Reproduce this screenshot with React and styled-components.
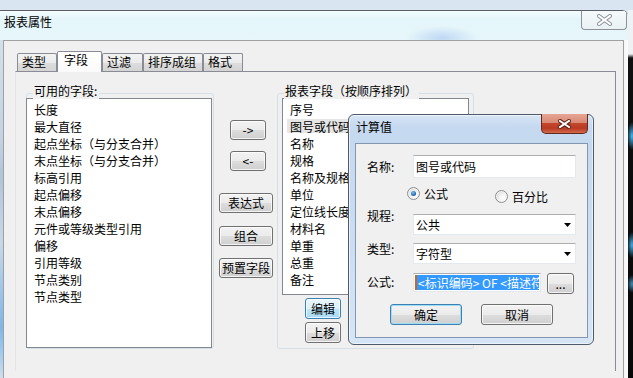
import React from 'react';
import styled, { createGlobalStyle, css } from 'styled-components';

const FONT = `"Noto Sans CJK SC", "Noto Sans", sans-serif`;

const GlobalStyle = createGlobalStyle`
  html, body {
    margin: 0;
    padding: 0;
    background: #dbe6f3;
  }
  body {
    font-family: ${FONT};
    font-size: 12px;
    color: #000;
  }
  * {
    box-sizing: border-box;
  }
`;

const Screen = styled.div`
  position: relative;
  width: 633px;
  height: 378px;
  overflow: hidden;
  display: flex;
  flex-direction: column;
  background: #dbe6f3;
`;

const TopStrip = styled.div`
  flex: none;
  height: 10px;
  background: #dae5f2;
`;

const Desktop = styled.div`
  flex: 1;
  display: flex;
  min-height: 0;
`;

const DesktopEdge = styled.div`
  flex: 1;
  background:
    radial-gradient(ellipse 5px 14px at 4px 126px, rgba(70, 195, 255, 0.95), transparent),
    radial-gradient(ellipse 5px 13px at 4px 235px, rgba(70, 195, 255, 0.9), transparent),
    radial-gradient(ellipse 5px 9px at 4px 274px, rgba(90, 200, 255, 0.7), transparent),
    linear-gradient(180deg, #eef2f5 0, #eef2f5 44px, #101010 48px, #080808 100%);
`;

/* ---------- main window ---------- */

const Window = styled.div`
  width: 628px;
  flex: none;
  display: flex;
  flex-direction: column;
  border-top: 1px solid #5a5f66;
  border-top-right-radius: 6px;
  overflow: hidden;
`;

const TitleBar = styled.div`
  height: 29px;
  flex: none;
  display: flex;
  align-items: flex-start;
  background:
    radial-gradient(ellipse 36px 12px at 442px 27px, rgba(120, 160, 235, 0.35), transparent),
    linear-gradient(180deg, #f4fcfe 0%, #e5f6fa 25%, #e6f6fa 100%);
`;

const WindowTitle = styled.div`
  flex: 1;
  padding: 3px 0 0 4px;
  line-height: 16px;
`;

const CloseBox = styled.div`
  width: 46px;
  height: 20px;
  margin: -1px 1px 0 0;
  border: 1px solid #8b929b;
  border-top: none;
  border-radius: 0 0 4px 4px;
  background: linear-gradient(180deg, #f6fafb, #e9f1f4);
  display: flex;
  align-items: center;
  justify-content: center;
`;

const WindowBody = styled.div`
  flex: 1;
  display: flex;
  min-height: 0;
`;

const SideFrame = styled.div`
  flex: none;
  width: ${p => p.$w}px;
  background: ${p => p.$bg};
`;

const Client = styled.div`
  flex: 1;
  border: 1px solid #a0a0a0;
  border-bottom: none;
  background: #f0f0f0;
  padding: 10px 0 0 11px;
`;

/* ---------- tabs ---------- */

const TabControl = styled.div`
  width: 601px;
  display: flex;
  flex-direction: column;
`;

const TabStrip = styled.div`
  height: 20px;
  display: flex;
  align-items: flex-end;
  padding-left: 2px;
`;

const Tab = styled.div`
  position: relative;
  width: ${p => p.$w}px;
  height: 18px;
  border: 1px solid #898c95;
  border-bottom: none;
  border-radius: 2px 2px 0 0;
  padding-left: 4px;
  line-height: 16px;
  white-space: nowrap;
  background: linear-gradient(180deg, #f3f3f3 0%, #ebebeb 50%, #dddddd 51%, #d4d4d4 100%);
  ${p => p.$active && css`
    height: 21px;
    margin-bottom: -1px;
    padding-left: 6px;
    z-index: 1;
    background: linear-gradient(180deg, #ffffff 0%, #fafafa 100%);
  `}
`;

const Panel = styled.div`
  height: 300px;
  border-top: 1px solid #898c95;
  border-right: 1px solid #898c95;
  border-left: 1px solid #e6e6e6;
  display: flex;
  align-items: flex-start;
  padding-left: 10px;
`;

/* ---------- group boxes & lists ---------- */

const GroupBox = styled.div`
  position: relative;
  flex: none;
  margin: 21px 0 0 ${p => p.$ml || 0}px;
  width: ${p => p.$w}px;
  height: 256px;
  border: 1px solid #d5dfe5;
  border-radius: 3px;
  padding-top: 4px;
  display: flex;
  flex-direction: column;
  align-items: flex-start;
`;

const GroupTitle = styled.span`
  position: absolute;
  top: -11px;
  left: 6px;
  padding: 0 2px 0 1px;
  background: #f0f0f0;
  line-height: 16px;
  white-space: nowrap;
`;

const ListBox = styled.div`
  width: ${p => p.$w}px;
  height: ${p => p.$h}px;
  margin-left: ${p => p.$ml}px;
  border: 1px solid #828790;
  background: #fff;
  padding-top: 2px;
  overflow: hidden;
`;

const ListItem = styled.div`
  height: 17px;
  line-height: 17px;
  white-space: nowrap;
  margin-left: ${p => p.$inset}px;
  padding-left: ${p => p.$pad}px;
  ${p => p.$selected && css`
    background: linear-gradient(180deg, transparent 1px, #e6e6e6 1px, #e6e6e6 15px, transparent 15px);
  `}
`;

/* ---------- buttons ---------- */

const Button = styled.button`
  flex: none;
  font-family: ${FONT};
  font-size: 12px;
  line-height: 16px;
  color: #000;
  width: ${p => p.$w}px;
  height: ${p => p.$h || 20}px;
  margin: ${p => p.$m || '0'};
  padding: 0;
  border: 1px solid #707070;
  border-radius: 3px;
  background: linear-gradient(180deg, #f2f2f2 0%, #ebebeb 50%, #dddddd 51%, #cfcfcf 100%);
  box-shadow: inset 0 0 0 1px rgba(255, 255, 255, 0.75);
  white-space: nowrap;
  ${p => p.$hot && css`
    border-color: #3c7fb1;
    background: linear-gradient(180deg, #eaf6fd 0%, #d9f0fc 50%, #bee6fd 51%, #a7d9f5 100%);
  `}
  ${p => p.$default && css`
    border-color: #3c7fb1;
    box-shadow: inset 0 0 0 1px #9fdcf9;
  `}
`;

const ButtonColumn = styled.div`
  flex: none;
  width: 54px;
  margin: 48px 0 0 5px;
  display: flex;
  flex-direction: column;
  align-items: flex-start;
`;

/* ---------- calc dialog ---------- */

const CalcWindow = styled.div`
  position: absolute;
  left: 348px;
  top: 114px;
  width: 246px;
  height: 231px;
  border: 1px solid #4f5b6a;
  border-radius: 6px;
  padding: 0 5px 6px 6px;
  display: flex;
  flex-direction: column;
  background:
    linear-gradient(180deg, rgba(255, 255, 255, 0.35) 0, rgba(255, 255, 255, 0) 12px),
    linear-gradient(180deg, #c4d8ef 0%, #cadcf1 45%, #d6e5f6 100%);
  box-shadow: inset 0 0 0 1px rgba(255, 255, 255, 0.55);
`;

const CalcTitleBar = styled.div`
  height: 28px;
  flex: none;
  display: flex;
  align-items: flex-start;
`;

const CalcTitle = styled.div`
  flex: 1;
  padding: 4px 0 0 1px;
  line-height: 16px;
`;

const RedClose = styled.div`
  width: 47px;
  height: 20px;
  margin-top: -1px;
  border: 1px solid #5e2a22;
  border-top: none;
  border-radius: 0 0 5px 5px;
  background: linear-gradient(180deg, #e7a595 0%, #d88a74 45%, #c2462d 50%, #b93a22 75%, #d26a4c 100%);
  display: flex;
  align-items: center;
  justify-content: center;
`;

const CalcClient = styled.div`
  flex: 1;
  border: 1px solid #8397b1;
  background: #f0f0f0;
  padding-left: 11px;
  display: flex;
  flex-direction: column;
`;

const Field = styled.div`
  flex: none;
  display: flex;
  align-items: flex-start;
  margin-top: ${p => p.$mt}px;
  height: ${p => p.$h}px;
`;

const FieldLabel = styled.div`
  flex: none;
  width: 46px;
  line-height: 16px;
  margin-top: ${p => p.$dy}px;
`;

const TextBox = styled.div`
  flex: none;
  width: ${p => p.$w}px;
  height: ${p => p.$h}px;
  border: 1px solid #e3e9ef;
  border-top-color: #abadb3;
  background: #fff;
  display: flex;
  align-items: center;
  padding: 0 4px 0 2px;
  line-height: 16px;
  white-space: nowrap;
  overflow: hidden;
`;

const BoxText = styled.span`
  flex: 1;
`;

const SelectedText = styled.div`
  flex: 1;
  height: 100%;
  background: #3399ff;
  color: #fff;
  border-left: 2px solid #c8661e;
  padding-left: 1px;
  display: flex;
  align-items: center;
  white-space: nowrap;
  overflow: hidden;
`;

const RadioItem = styled.div`
  display: flex;
  align-items: center;
  height: 13px;
  margin: ${p => p.$dy || 0}px 0 0 ${p => p.$ml}px;
  line-height: 16px;
`;

const RadioCircle = styled.span`
  position: relative;
  flex: none;
  width: 13px;
  height: 13px;
  margin-right: 4px;
  border: 1px solid #8e8f8f;
  border-radius: 50%;
  background: radial-gradient(circle at 65% 65%, #ffffff 0%, #f2f2f2 40%, #c9c9c9 100%);
  box-shadow: inset 0 0 0 1px #f4f4f4;
  ${p => p.$checked && css`
    &::after {
      content: '';
      position: absolute;
      left: 3px;
      top: 3px;
      width: 5px;
      height: 5px;
      border-radius: 50%;
      background: radial-gradient(circle at 40% 35%, #7fc0f2 0%, #2a71b6 55%, #173e72 100%);
    }
  `}
`;

function CloseX({ stroke, fill, w = 13, h = 10, sw = 4 }) {
  return (
    <svg width={w + 2} height={h + 2} viewBox={`0 0 ${w + 2} ${h + 2}`}>
      <path d={`M2 2 L${w} ${h} M${w} 2 L2 ${h}`} stroke={stroke} strokeWidth={sw} strokeLinecap="square" fill="none" />
      <path d={`M2 2 L${w} ${h} M${w} 2 L2 ${h}`} stroke={fill} strokeWidth={sw - 2} strokeLinecap="square" fill="none" />
    </svg>
  );
}

function Arrow() {
  return (
    <svg width="7" height="4" viewBox="0 0 7 4">
      <path d="M0 0 H7 L3.5 4 Z" fill="#000" />
    </svg>
  );
}

const availableFields = [
  '长度', '最大直径', '起点坐标（与分支合并）', '末点坐标（与分支合并）', '标高引用',
  '起点偏移', '末点偏移', '元件或等级类型引用', '偏移', '引用等级', '节点类别', '节点类型',
];

const reportFields = [
  '序号', '图号或代码', '名称', '规格', '名称及规格', '单位',
  '定位线长度', '材料名', '单重', '总重', '备注',
];

const tabs = [
  { label: '类型', w: 40 },
  { label: '字段', w: 45, active: true },
  { label: '过滤', w: 41 },
  { label: '排序成组', w: 60 },
  { label: '格式', w: 40 },
];

export default function App() {
  return (
    <Screen>
      <GlobalStyle />
      <TopStrip />
      <Desktop>
        <Window>
          <TitleBar>
            <WindowTitle>报表属性</WindowTitle>
            <CloseBox>
              <CloseX stroke="#8a9099" fill="#ffffff" />
            </CloseBox>
          </TitleBar>
          <WindowBody>
            <SideFrame $w={3} $bg="linear-gradient(180deg, #d3dfec 0%, #c2d2e4 30%, #b0c4da 40%, #c8d8ea 60%, #7db7ea 85%, #9ccaf0 92%, #cfdeee 100%)" />
            <Client>
              <TabControl>
                <TabStrip>
                  {tabs.map(t => (
                    <Tab key={t.label} $w={t.w} $active={t.active}>{t.label}</Tab>
                  ))}
                </TabStrip>
                <Panel>
                  <GroupBox $w={188}>
                    <GroupTitle>可用的字段:</GroupTitle>
                    <ListBox $w={186} $h={250} $ml={-1}>
                      {availableFields.map(f => (
                        <ListItem key={f} $inset={0} $pad={7}>{f}</ListItem>
                      ))}
                    </ListBox>
                  </GroupBox>

                  <ButtonColumn>
                    <Button $w={36} $m="0 0 0 11px">-&gt;</Button>
                    <Button $w={36} $m="11px 0 0 11px">&lt;-</Button>
                    <Button $w={54} $m="22px 0 0 0">表达式</Button>
                    <Button $w={54} $m="13px 0 0 0">组合</Button>
                    <Button $w={54} $m="12px 0 0 0">预置字段</Button>
                  </ButtonColumn>

                  <GroupBox $w={197} $ml={4}>
                    <GroupTitle>报表字段（按顺序排列）</GroupTitle>
                    <ListBox $w={187} $h={197} $ml={4}>
                      {reportFields.map((f, i) => (
                        <ListItem key={f} $inset={4} $pad={3} $selected={i === 1}>{f}</ListItem>
                      ))}
                    </ListBox>
                    <Button $w={36} $h={21} $m="3px 0 0 27px" $hot>编辑</Button>
                    <Button $w={36} $h={21} $m="3px 0 0 27px">上移</Button>
                  </GroupBox>
                </Panel>
              </TabControl>
            </Client>
            <SideFrame $w={4} $bg="linear-gradient(90deg, #f6f6f6, #fbfbfb)" />
          </WindowBody>
        </Window>
        <DesktopEdge />
      </Desktop>

      <CalcWindow>
        <CalcTitleBar>
          <CalcTitle>计算值</CalcTitle>
          <RedClose>
            <CloseX stroke="#5a1e14" fill="#ffffff" w={11} h={8} />
          </RedClose>
        </CalcTitleBar>
        <CalcClient>
          <Field $mt={11} $h={23}>
            <FieldLabel $dy={4}>名称:</FieldLabel>
            <TextBox $w={163} $h={23}>
              <BoxText>图号或代码</BoxText>
            </TextBox>
          </Field>

          <Field $mt={9} $h={13}>
            <RadioItem $ml={40}>
              <RadioCircle $checked />
              公式
            </RadioItem>
            <RadioItem $ml={47} $dy={3}>
              <RadioCircle />
              百分比
            </RadioItem>
          </Field>

          <Field $mt={14} $h={21}>
            <FieldLabel $dy={-6}>规程:</FieldLabel>
            <TextBox $w={163} $h={21}>
              <BoxText>公共</BoxText>
              <Arrow />
            </TextBox>
          </Field>

          <Field $mt={8} $h={21}>
            <FieldLabel $dy={-2}>类型:</FieldLabel>
            <TextBox $w={163} $h={21}>
              <BoxText>字符型</BoxText>
              <Arrow />
            </TextBox>
          </Field>

          <Field $mt={9} $h={21}>
            <FieldLabel $dy={1}>公式:</FieldLabel>
            <TextBox $w={128} $h={19} style={{ padding: 1 }}>
              <SelectedText>&lt;标识编码&gt; OF &lt;描述符</SelectedText>
            </TextBox>
            <Button $w={27} $h={21} $m="0 0 0 6px">...</Button>
          </Field>

          <Field $mt={10} $h={21}>
            <Button $w={72} $h={21} $m="0 0 0 23px" $default>确定</Button>
            <Button $w={72} $h={21} $m="0 0 0 19px">取消</Button>
          </Field>
        </CalcClient>
      </CalcWindow>
    </Screen>
  );
}
